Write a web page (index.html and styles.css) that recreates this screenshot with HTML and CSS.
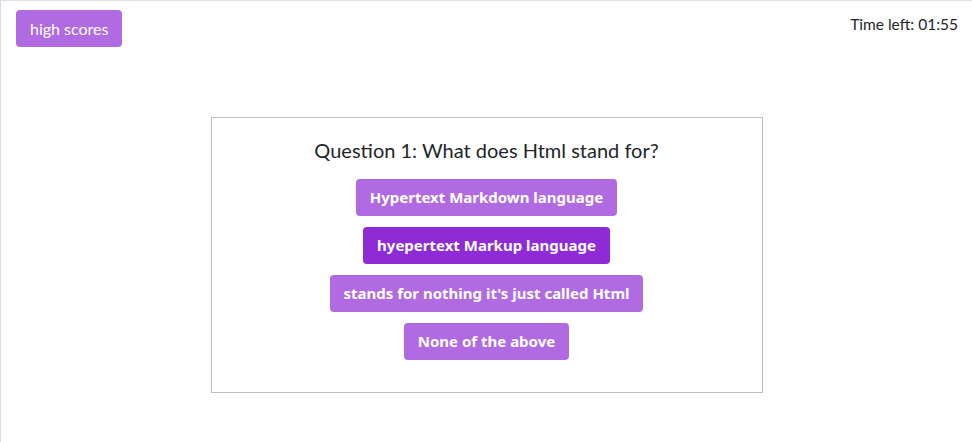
FILE: index.html
```html
<!DOCTYPE html>
<html>
<head>
<meta charset="utf-8">
<link rel="stylesheet" href="styles.css">
</head>
<body>
<div class="page">
  <header class="topbar">
    <button class="btn btn-light">high scores</button>
    <div class="timer">Time left: 01:55</div>
  </header>
  <main class="quiz">
    <h2 class="question">Question 1: What does Html stand for?</h2>
    <div class="answers">
      <button class="btn btn-answer">Hypertext Markdown language</button>
      <button class="btn btn-answer active">hyepertext Markup language</button>
      <button class="btn btn-answer">stands for nothing it's just called Html</button>
      <button class="btn btn-answer">None of the above</button>
    </div>
  </main>
</div>
</body>
</html>
```
FILE: styles.css
```css
html, body {
  margin: 0;
  padding: 0;
  height: 100%;
}
body {
  font-family: "Lato", "Noto Sans", sans-serif;
  color: #212529;
  background: #fff;
}
.page {
  box-sizing: border-box;
  height: 100%;
  border-top: 1px solid #dcdfe3;
  border-left: 1px solid #d3ddef;
}
.topbar {
  display: flex;
  justify-content: space-between;
  align-items: flex-start;
  padding: 9px 14px 0 15px;
}
.btn {
  font-family: inherit;
  border: none;
  border-radius: 4px;
  color: #fff;
  background: #b06be3;
  cursor: pointer;
}
.btn-light {
  font-size: 16px;
  padding: 0 14px;
  height: 37px;
  line-height: 37px;
}
.timer {
  font-size: 15.5px;
  padding-top: 5px;
  color: #212529;
}
.quiz {
  box-sizing: border-box;
  width: 552px;
  height: 276px;
  margin: 70px auto 0;
  border: 1px solid #bdbdbd;
  display: flex;
  flex-direction: column;
  align-items: center;
}
.question {
  font-size: 20px;
  font-weight: 400;
  margin: 18px 0 0;
  line-height: 28px;
}
.answers {
  display: flex;
  flex-direction: column;
  align-items: center;
  gap: 11px;
  margin-top: 15px;
}
.btn-answer {
  font-family: "Noto Sans", "Lato", sans-serif;
  font-size: 15px;
  font-weight: 700;
  height: 37px;
  padding: 0 14px;
  line-height: 37px;
}
.btn-answer.active {
  background: #8e2bd7;
}
```
